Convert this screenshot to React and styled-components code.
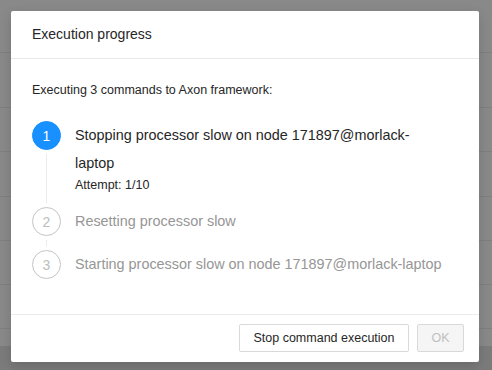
import React from 'react';
import styled, { createGlobalStyle } from 'styled-components';

const GlobalStyle = createGlobalStyle`
  html, body {
    margin: 0;
    padding: 0;
  }
  body {
    font-family: "Liberation Sans", Arial, sans-serif;
    background: #8a8a8a;
  }
`;

// masked table behind the dialog
const Backdrop = styled.div`
  width: 492px;
  height: 370px;
  display: flex;
  flex-direction: column;
  background: #898989;
  overflow: hidden;
`;

const BackRow = styled.div`
  height: ${(p) => p.h}px;
  flex-shrink: 0;
  border-bottom: ${(p) => (p.plain ? 'none' : '1px solid #7f7f7f')};
  box-sizing: border-box;
`;

const BackFooter = styled.div`
  flex: 1;
  background: #7b7b7b;
`;

const Modal = styled.div`
  position: absolute;
  left: 11px;
  top: 11px;
  width: 468px;
  height: 351px;
  background: #fff;
  border-radius: 2px;
  box-shadow: 0 4px 12px rgba(0, 0, 0, 0.15);
  display: flex;
  flex-direction: column;
`;

const Header = styled.div`
  height: 48px;
  box-sizing: border-box;
  padding: 0 21px 2px;
  display: flex;
  align-items: center;
  border-bottom: 1px solid #e8e8e8;
  font-size: 14px;
  color: #262626;
`;

const Body = styled.div`
  flex: 1;
  padding: 22px 21px 0;
  font-size: 12.5px;
  color: #262626;
`;

const Intro = styled.div`
  line-height: 18px;
  margin-bottom: 22px;
`;

const Steps = styled.div`
  display: flex;
  flex-direction: column;
`;

const Step = styled.div`
  display: flex;
  gap: 14px;
  min-height: ${(p) => (p.last ? 'auto' : '43px')};
`;

const IconCol = styled.div`
  display: flex;
  flex-direction: column;
  align-items: center;
  width: 29px;
  flex-shrink: 0;
`;

const Circle = styled.div`
  width: 29px;
  height: 29px;
  box-sizing: border-box;
  border-radius: 50%;
  display: flex;
  align-items: center;
  justify-content: center;
  font-size: 14px;
  background: ${(p) => (p.active ? '#1890ff' : '#fff')};
  border: 1px solid ${(p) => (p.active ? '#1890ff' : '#c4c4c4')};
  color: ${(p) => (p.active ? '#fff' : '#bdbdbd')};
`;

const Tail = styled.div`
  flex: 1;
  width: 1px;
  margin: 4px 0;
  background: #ececec;
`;

const Content = styled.div`
  padding-bottom: ${(p) => (p.pad ? '13px' : '0')};
`;

const Title = styled.div`
  font-size: 14.4px;
  line-height: 28px;
  color: ${(p) => (p.active ? '#262626' : '#969696')};
`;

const Desc = styled.div`
  font-size: 12.5px;
  line-height: 18px;
  color: #262626;
  margin-top: -1px;
`;

const Footer = styled.div`
  border-top: 1px solid #ececec;
  padding: 9px 15px 10px;
  display: flex;
  justify-content: flex-end;
  gap: 8px;
`;

const Button = styled.button`
  width: ${(p) => p.w}px;
  height: 28px;
  box-sizing: border-box;
  padding: 0;
  font-family: "Liberation Sans", Arial, sans-serif;
  font-size: 12.5px;
  border-radius: 2px;
  border: 1px solid #d9d9d9;
  background: ${(p) => (p.disabled ? '#f5f5f5' : '#fff')};
  color: ${(p) => (p.disabled ? '#c0c0c0' : '#262626')};
  cursor: ${(p) => (p.disabled ? 'not-allowed' : 'pointer')};
`;

const steps = [
  {
    title: 'Stopping processor slow on node 171897@morlack-laptop',
    desc: 'Attempt: 1/10',
    active: true,
  },
  { title: 'Resetting processor slow' },
  { title: 'Starting processor slow on node 171897@morlack-laptop' },
];

const App = () => {
  return (
    <>
      <GlobalStyle />
      <Backdrop>
        <BackRow h={53} />
        <BackRow h={55} />
        <BackRow h={44} />
        <BackRow h={45} />
        <BackRow h={44} />
        <BackRow h={44} />
        <BackRow h={44} />
        <BackRow h={17} plain />
        <BackFooter />
      </Backdrop>
      <Modal>
        <Header>Execution progress</Header>
        <Body>
          <Intro>Executing 3 commands to Axon framework:</Intro>
          <Steps>
            {steps.map((s, i) => {
              const last = i === steps.length - 1;
              return (
                <Step key={i} last={last}>
                  <IconCol>
                    <Circle active={s.active}>{i + 1}</Circle>
                    {!last && <Tail />}
                  </IconCol>
                  <Content pad={!!s.desc}>
                    <Title active={s.active}>
                      {s.active ? (
                        <>
                          Stopping processor slow on node 171897@morlack-
                          <br />
                          laptop
                        </>
                      ) : (
                        s.title
                      )}
                    </Title>
                    {s.desc && <Desc>{s.desc}</Desc>}
                  </Content>
                </Step>
              );
            })}
          </Steps>
        </Body>
        <Footer>
          <Button w={170}>Stop command execution</Button>
          <Button w={47} disabled>OK</Button>
        </Footer>
      </Modal>
    </>
  );
};

export default App;
